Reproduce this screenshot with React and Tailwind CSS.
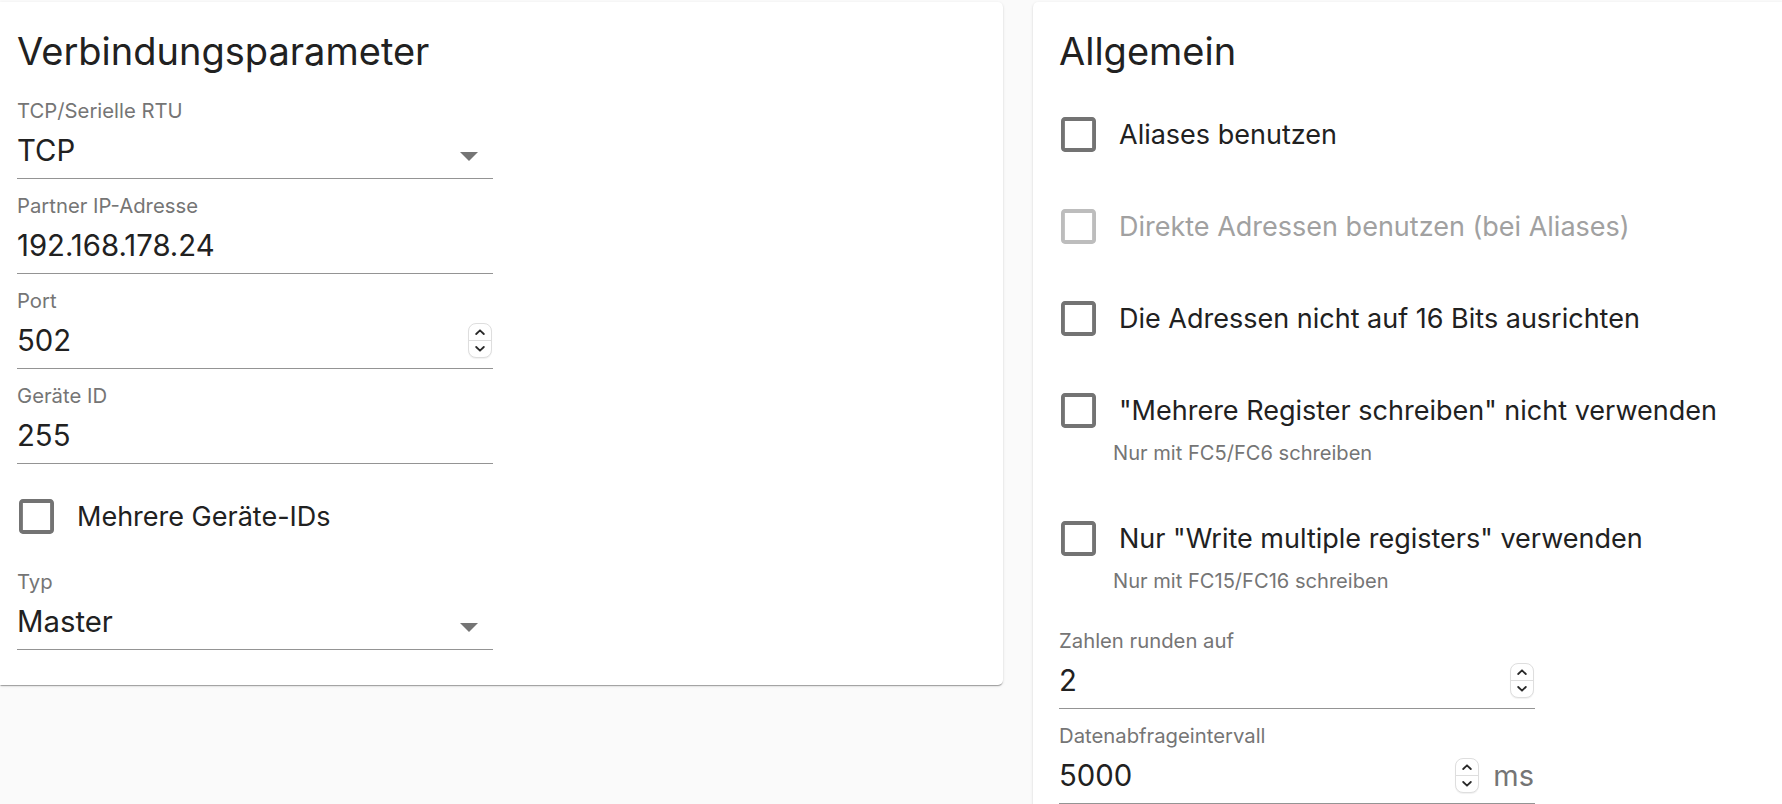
import React from 'react';

// MUI-like outline checkbox box
const BoxIcon = ({ disabled }) => (
  <svg className="ml-[2px] shrink-0" width="35" height="35" viewBox="3 3 18 18">
    <path
      d="M19 5v14H5V5h14m0-2H5c-1.1 0-2 .9-2 2v14c0 1.1.9 2 2 2h14c1.1 0 2-.9 2-2V5c0-1.1-.9-2-2-2z"
      fill={disabled ? '#bdbdbd' : '#737373'}
    />
  </svg>
);

const Spinner = () => (
  <div className="flex h-[35px] w-[24px] shrink-0 flex-col overflow-hidden rounded-[8px] border border-[#dedede] bg-white shadow-[0_1px_1px_rgba(0,0,0,0.06)]">
    <div className="flex flex-1 items-center justify-center border-b border-[#dedede]">
      <svg width="10" height="6" viewBox="0 0 10 6">
        <path d="M1.2 5 L5 1.3 L8.8 5" stroke="#2a2a2a" strokeWidth="1.8" fill="none" strokeLinecap="round" strokeLinejoin="round" />
      </svg>
    </div>
    <div className="flex flex-1 items-center justify-center">
      <svg width="10" height="6" viewBox="0 0 10 6">
        <path d="M1.2 1 L5 4.7 L8.8 1" stroke="#2a2a2a" strokeWidth="1.8" fill="none" strokeLinecap="round" strokeLinejoin="round" />
      </svg>
    </div>
  </div>
);

const Field = ({ label, value, select, spinner, unit }) => (
  <div className="w-[476px]">
    <div className="h-[24px] text-[20.3px] leading-[24px] text-[#757575]">{label}</div>
    <div className="flex h-[56px] items-center border-b border-[#949494]">
      <span className="flex-1 text-[29.3px] leading-[55px] text-[#212121]">{value}</span>
      {select && (
        <svg className="mr-[15px] mt-[11px]" width="18" height="9" viewBox="7 10 10 5">
          <path d="M7 10l5 5 5-5z" fill="#757575" />
        </svg>
      )}
      {spinner && !unit && (
        <div className="mr-[1px]">
          <Spinner />
        </div>
      )}
      {unit && (
        <>
          <Spinner />
          <span className="ml-[14px] mr-[1px] text-[29px] leading-[55px] text-[#757575]">{unit}</span>
        </>
      )}
    </div>
  </div>
);

const Check = ({ label, disabled, helper }) => (
  <div>
    <div className="flex h-[35px] items-center">
      <BoxIcon disabled={disabled} />
      <span className={`ml-[23px] whitespace-nowrap text-[27px] leading-none ${disabled ? 'text-[#a1a1a1]' : 'text-[#212121]'}`}>
        {label}
      </span>
    </div>
    {helper && (
      <div className="mt-[13px] h-[24px] pl-[54px] text-[20.1px] leading-[24px] text-[#757575]">{helper}</div>
    )}
  </div>
);

export default function App() {
  return (
    <div className="h-[804px] w-full overflow-hidden bg-[#fafafa] pt-[2px] font-[Inter,sans-serif]">
      <div className="flex items-start gap-[30px]">
        {/* Verbindungsparameter */}
        <div className="w-[1003px] shrink-0 rounded-r-[5px] bg-white px-[17px] pb-[35px] pt-[26px] shadow-[0_2px_1px_-1px_rgba(0,0,0,0.2),0_1px_1px_0_rgba(0,0,0,0.14),0_1px_3px_0_rgba(0,0,0,0.12)]">
          <h2 className="mb-[25px] h-[46px] text-[38px] leading-[46px] text-[#212121]">Verbindungsparameter</h2>
          <div className="flex flex-col gap-[15px]">
            <Field label="TCP/Serielle RTU" value="TCP" select />
            <Field label="Partner IP-Adresse" value="192.168.178.24" />
            <Field label="Port" value="502" spinner />
            <Field label="Geräte ID" value="255" />
          </div>
          <div className="mt-[35px]">
            <Check label="Mehrere Geräte-IDs" />
          </div>
          <div className="mt-[36px]">
            <Field label="Typ" value="Master" select />
          </div>
        </div>

        {/* Allgemein */}
        <div className="min-h-[820px] flex-1 rounded-l-[5px] bg-white pl-[26px] pt-[26px] shadow-[0_2px_1px_-1px_rgba(0,0,0,0.2),0_1px_1px_0_rgba(0,0,0,0.14),0_1px_3px_0_rgba(0,0,0,0.12)]">
          <h2 className="h-[46px] text-[38px] leading-[46px] text-[#212121]">Allgemein</h2>
          <div className="mt-[43px] flex flex-col gap-[57px]">
            <Check label="Aliases benutzen" />
            <Check label="Direkte Adressen benutzen (bei Aliases)" disabled />
            <Check label="Die Adressen nicht auf 16 Bits ausrichten" />
            <Check label={'"Mehrere Register schreiben" nicht verwenden'} helper="Nur mit FC5/FC6 schreiben" />
          </div>
          <div className="mt-[56px]">
            <Check label={'Nur "Write multiple registers" verwenden'} helper="Nur mit FC15/FC16 schreiben" />
          </div>
          <div className="mt-[36px] flex flex-col gap-[15px]">
            <Field label="Zahlen runden auf" value="2" spinner />
            <Field label="Datenabfrageintervall" value="5000" unit="ms" />
          </div>
        </div>
      </div>
    </div>
  );
}
